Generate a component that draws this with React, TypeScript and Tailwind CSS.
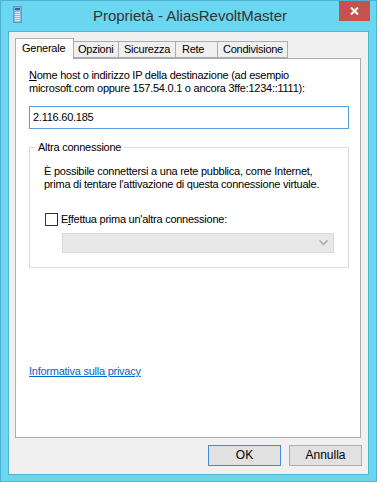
export default function App() {
  return (
    <div className="w-[377px] h-[482px] bg-[#6bd6f0] border border-[#4fb2d2] flex flex-col font-['Liberation_Sans',sans-serif] text-[11px] leading-[13px] tracking-[-0.25px] text-black relative overflow-hidden">
      {/* Title bar */}
      <div className="h-[30px] shrink-0 relative flex items-center justify-center">
        <svg className="absolute left-[12px] top-[5px]" width="9" height="17" viewBox="0 0 9 17">
          <rect x="0.5" y="0.5" width="8" height="16" fill="#8fb4dc" stroke="#6d93c0" />
          <rect x="2" y="2" width="5" height="2" fill="#3d5f91" />
          <rect x="2" y="6" width="5" height="1" fill="#e4eef9" />
          <rect x="2" y="8" width="5" height="1" fill="#e4eef9" />
          <rect x="2" y="10" width="5" height="1" fill="#e4eef9" />
          <rect x="2" y="12" width="5" height="1" fill="#e4eef9" />
          <rect x="2" y="14" width="5" height="1" fill="#e4eef9" />
        </svg>
        <span className="font-['Liberation_Sans',sans-serif] text-[15px] leading-[20px] tracking-normal text-[#333333] -mt-[1px] ml-[3px]">
          Proprietà - AliasRevoltMaster
        </span>
        <div className="absolute right-[6px] top-0 w-[31px] h-[20px] bg-[#c75050] flex items-center justify-center">
          <svg width="9" height="8" viewBox="0 0 9 8">
            <path d="M1 0.5 L8 7.5 M8 0.5 L1 7.5" stroke="white" strokeWidth="2" />
          </svg>
        </div>
      </div>

      {/* Client area */}
      <div className="mx-[7px] mb-[6px] flex-1 bg-[#f0f0f0] border border-[#52b5d3] flex flex-col pl-[6px] pr-[6px] pt-[6px]">
        {/* Tabs */}
        <div className="h-[20px] flex items-end relative z-10">
          <div className="w-[59px] h-[21px] -mb-px bg-white border border-b-0 border-[#acacac] flex items-start pt-[3px] pl-[6px]">
            Generale
          </div>
          <div className="w-[46px] h-[17px] -ml-px bg-[#f0f0f0] border border-[#acacac] flex items-center pl-[4px]">
            Opzioni
          </div>
          <div className="w-[58px] h-[17px] -ml-px bg-[#f0f0f0] border border-[#acacac] flex items-center pl-[5px]">
            Sicurezza
          </div>
          <div className="w-[43px] h-[17px] -ml-px bg-[#f0f0f0] border border-[#acacac] flex items-center pl-[6px]">
            Rete
          </div>
          <div className="w-[71px] h-[17px] -ml-px bg-[#f0f0f0] border border-[#acacac] flex items-center pl-[5px]">
            Condivisione
          </div>
        </div>

        {/* Panel */}
        <div className="h-[380px] mr-px bg-white border border-[#acacac] flex flex-col pl-[13px] pr-[12px] pt-[10px]">
          <p>
            <u>N</u>ome host o indirizzo IP della destinazione (ad esempio
            <br />
            microsoft.com oppure 157.54.0.1 o ancora 3ffe:1234::1111):
          </p>
          <div className="mt-[11px] w-[320px] h-[23px] border border-[#5a9ee0] flex items-center pl-[3px]">
            2.116.60.185
          </div>

          {/* Group box */}
          <div className="relative mt-[18px] w-[320px] h-[121px] border border-[#dcdcdc] flex flex-col pl-[14px] pt-[17px]">
            <span className="absolute left-[5px] -top-[7px] bg-white px-[3px]">Altra connessione</span>
            <p>
              È possibile connettersi a una rete pubblica, come Internet,
              <br />
              prima di tentare l'attivazione di questa connessione virtuale.
            </p>
            <div className="mt-[22px] flex items-center ml-px">
              <div className="w-[13px] h-[13px] border border-[#333333] bg-white" />
              <span className="ml-[3px]">
                E<u>f</u>fettua prima un'altra connessione:
              </span>
            </div>
            <div className="mt-[7px] ml-[18px] w-[272px] h-[20px] bg-[#e8e8e8] border border-[#d9d9d9] flex items-center justify-end pr-[5px]">
              <svg width="9" height="6" viewBox="0 0 9 6">
                <path d="M0.5 0.5 L4.5 4.5 L8.5 0.5" fill="none" stroke="#a8a8a8" strokeWidth="1.5" />
              </svg>
            </div>
          </div>

          <div className="mt-[97px]">
            <span className="text-[#0066cc] underline">Informativa sulla privacy</span>
          </div>
        </div>

        {/* Buttons */}
        <div className="mt-[7px] flex justify-end gap-[8px]">
          <div className="w-[73px] h-[21px] bg-[#e1e1e1] border border-[#3c8fe0] flex items-center justify-center text-[12px] tracking-normal">
            OK
          </div>
          <div className="w-[73px] h-[21px] bg-[#e1e1e1] border border-[#adadad] flex items-center justify-center text-[12px] tracking-normal">
            Annulla
          </div>
        </div>
      </div>
    </div>
  );
}
